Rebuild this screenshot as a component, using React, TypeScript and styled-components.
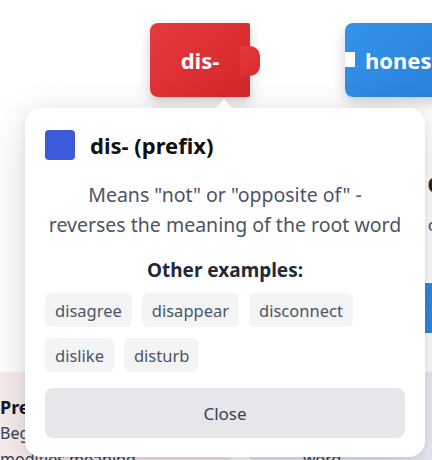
import React from "react";
import styled, { createGlobalStyle } from "styled-components";

const Global = createGlobalStyle`
  html, body { margin: 0; padding: 0; background: #ffffff; }
  body { font-family: "Noto Sans", "Noto Sans CJK KR", sans-serif; overflow: hidden; }
  * { box-sizing: border-box; }
`;

const Page = styled.div`
  position: relative;
  width: 432px;
  height: 460px;
  overflow: hidden;
  background: #ffffff;
`;

const PieceRow = styled.div`
  display: flex;
  padding: 23px 0 0 150px;
  gap: 95px;
  height: 97px;
`;

const Piece = styled.div<{ $color: string; $dark: string }>`
  position: relative;
  flex-shrink: 0;
  height: 74px;
  min-width: 100px;
  padding: 0 20px;
  border-radius: 8px 2px 2px 8px;
  background: linear-gradient(135deg, ${(p) => p.$color}, ${(p) => p.$dark});
  color: #fff;
  font-weight: 700;
  font-size: 22px;
  display: flex;
  align-items: center;
  justify-content: center;
  box-shadow: 0 6px 14px rgba(0, 0, 0, 0.18);
  white-space: nowrap;
`;

const Tab = styled.div`
  position: absolute;
  right: -10px;
  top: 23px;
  width: 20px;
  height: 30px;
  border-radius: 2px 10px 10px 2px;
  background: linear-gradient(135deg, #e53b3e, #d8292c);
`;

const Notch = styled.div`
  position: absolute;
  left: 0;
  top: 29px;
  width: 10px;
  height: 15px;
  background: #fff;
`;

const Heading = styled.div`
  display: flex;
  justify-content: flex-end;
  white-space: nowrap;
  font-size: 28px;
  font-weight: 700;
  color: #1f2937;
  margin: 67px -12px 0 0;
  line-height: 36px;
`;

const Sub = styled.div`
  display: flex;
  justify-content: flex-end;
  white-space: nowrap;
  font-size: 17px;
  color: #4b5563;
  margin: 13px -4px 0 0;
  line-height: 24px;
`;

const CtaRow = styled.div`
  display: flex;
  justify-content: flex-end;
  margin-top: 46px;
`;

const Cta = styled.div`
  width: 60px;
  height: 50px;
  background: #2f8ae6;
  color: #fff;
  font-size: 18px;
  display: flex;
  align-items: center;
  padding-left: 6px;
  margin-right: -53px;
`;

const Cards = styled.div`
  display: grid;
  grid-template-columns: 230px 1fr;
  gap: 20px;
  margin-top: 39px;
  height: 100px;
`;

const InfoCard = styled.div<{ $bg: string }>`
  background: ${(p) => p.$bg};
  padding-top: 22px;
  font-size: 16px;
  color: #374151;
  line-height: 26px;
  white-space: nowrap;
`;

const InfoTitle = styled.div`
  font-weight: 700;
  font-size: 18px;
  color: #111827;
`;

const Popover = styled.div`
  position: absolute;
  left: 25px;
  top: 108px;
  width: 400px;
  background: #ffffff;
  border-radius: 16px;
  padding: 22px 20px 19px;
  box-shadow: 0 10px 40px rgba(0, 0, 0, 0.16), 0 2px 8px rgba(0, 0, 0, 0.05);
`;

const Arrow = styled.div`
  position: absolute;
  top: -9px;
  left: 190px;
  width: 0;
  height: 0;
  border-left: 9px solid transparent;
  border-right: 9px solid transparent;
  border-bottom: 10px solid #ffffff;
`;

const TitleRow = styled.div`
  display: flex;
  align-items: center;
  gap: 15px;
`;

const Swatch = styled.div`
  width: 30px;
  height: 30px;
  border-radius: 4px;
  background: #3b5bdb;
`;

const Title = styled.div`
  font-size: 22px;
  font-weight: 700;
  color: #111111;
  line-height: 30px;
`;

const Desc = styled.p`
  margin: 20px 0 0;
  text-align: center;
  font-size: 19.5px;
  line-height: 30px;
  color: #4b5563;
`;

const ExamplesLabel = styled.div`
  margin-top: 18px;
  text-align: center;
  font-size: 19px;
  font-weight: 700;
  color: #1f2937;
  line-height: 24px;
`;

const Chips = styled.div`
  display: flex;
  flex-wrap: wrap;
  gap: 11px 10px;
  margin-top: 11px;
`;

const Chip = styled.span`
  height: 34px;
  padding: 0 10px;
  border-radius: 6px;
  background: #f3f4f6;
  color: #4b5563;
  font-size: 16.5px;
  display: flex;
  align-items: center;
`;

const CloseButton = styled.button`
  display: block;
  margin-top: 16px;
  width: 100%;
  height: 50px;
  border: none;
  border-radius: 8px;
  background: #e5e7eb;
  color: #374151;
  font-family: inherit;
  font-size: 17px;
`;

const Indent = styled.span<{ $by: number }>`
  padding-left: ${(p) => p.$by}px;
`;

export default function App() {
  const examples = ["disagree", "disappear", "disconnect", "dislike", "disturb"];
  return (
    <Page>
      <Global />
      <PieceRow>
        <Piece $color="#e53b3e" $dark="#d4262a">
          dis-
          <Tab />
        </Piece>
        <Piece $color="#3393ea" $dark="#2a7fd8">
          <Notch />
          honest
        </Piece>
      </PieceRow>
      <Heading>e</Heading>
      <Sub>c</Sub>
      <CtaRow>
        <Cta>o</Cta>
      </CtaRow>
      <Cards>
        <InfoCard $bg="#f8eded">
          <InfoTitle>Pre</InfoTitle>
          Beg
          <br />
          modifies meaning
        </InfoCard>
        <InfoCard $bg="#e8edf7">
          <InfoTitle>&nbsp;</InfoTitle>
          <Indent $by={153}>o</Indent>
          <br />
          <Indent $by={53}>word</Indent>
        </InfoCard>
      </Cards>
      <Popover>
        <Arrow />
        <TitleRow>
          <Swatch />
          <Title>dis- (prefix)</Title>
        </TitleRow>
        <Desc>
          Means "not" or "opposite of" -<br />
          reverses the meaning of the root word
        </Desc>
        <ExamplesLabel>Other examples:</ExamplesLabel>
        <Chips>
          {examples.map((e) => (
            <Chip key={e}>{e}</Chip>
          ))}
        </Chips>
        <CloseButton>Close</CloseButton>
      </Popover>
    </Page>
  );
}
